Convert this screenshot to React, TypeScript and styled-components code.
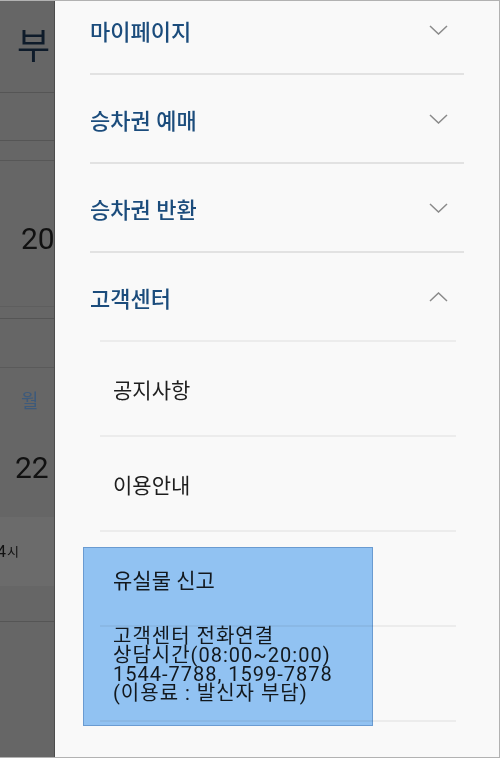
import React, { FC } from "react";
import styled, { createGlobalStyle } from "styled-components";

const GlobalStyle = createGlobalStyle`
  html, body {
    margin: 0;
    padding: 0;
    background: #ffffff;
  }
  * {
    box-sizing: border-box;
  }
`;

const FONT = `Roboto, "Noto Sans CJK KR", sans-serif`;

const Frame = styled.div`
  width: 500px;
  height: 758px;
  display: flex;
  overflow: hidden;
  border: 1px solid #b2b2b2;
  border-left: none;
  font-family: ${FONT};
`;

/* the page behind the drawer, dimmed */
const Backdrop = styled.div`
  width: 54px;
  flex: none;
  background: #666666;
  display: flex;
  flex-direction: column;
  overflow: hidden;
  white-space: nowrap;
`;

const BackCell = styled.div<{ $h?: number; $pt?: number; $line?: string; $bg?: string }>`
  height: ${(p) => (p.$h ? `${p.$h}px` : "auto")};
  flex: ${(p) => (p.$h ? "none" : "1")};
  padding-top: ${(p) => p.$pt ?? 0}px;
  display: flex;
  align-items: ${(p) => (p.$pt !== undefined ? "flex-start" : "center")};
  background: ${(p) => p.$bg ?? "transparent"};
  border-bottom: ${(p) => (p.$line ? `1px solid ${p.$line}` : "none")};
`;

const BackText = styled.span<{ $size: number; $color: string; $left: number }>`
  font-size: ${(p) => p.$size}px;
  line-height: 1;
  color: ${(p) => p.$color};
  margin-left: ${(p) => p.$left}px;
`;

const Drawer = styled.div`
  flex: 1;
  position: relative;
  background: #f9f9f9;
  border-left: 1px solid #4c4c4c;
  padding: 0 35px;
  overflow: hidden;
`;

const MenuList = styled.div`
  margin-top: -15px;
  display: flex;
  flex-direction: column;
`;

const MainRow = styled.div<{ $open?: boolean }>`
  height: ${(p) => (p.$open ? 87 : 89)}px;
  display: flex;
  align-items: center;
  justify-content: space-between;
  padding-right: 16px;
  border-bottom: ${(p) => (p.$open ? "none" : "2px solid #e2e2e2")};
  font-size: 22px;
  font-weight: 500;
  color: #1b4c7c;
`;

const SubList = styled.div`
  margin: 0 8px 0 10px;
  display: flex;
  flex-direction: column;
`;

const SubItem = styled.div`
  height: 95px;
  display: flex;
  align-items: center;
  padding-left: 13px;
  border-top: 2px solid #ececec;
  font-size: 21px;
  color: #1e1e1e;
`;

const CallItem = styled.div`
  border-top: 2px solid #ececec;
  border-bottom: 2px solid #ececec;
  padding: 0 0 17px 13px;
  color: #1e1e1e;
`;

const CallLine = styled.div`
  height: 19px;
  font-size: 20px;
  line-height: 19px;
  letter-spacing: 1px;
  white-space: nowrap;
`;

const Highlight = styled.div`
  position: absolute;
  left: 28px;
  top: 546px;
  width: 290px;
  height: 179px;
  background: #95c7f8;
  border: 1px solid #6c9fd6;
  mix-blend-mode: multiply;
  pointer-events: none;
`;

const Chevron: FC<{ up?: boolean }> = ({ up }) => (
  <svg width="19" height="10" viewBox="0 0 19 10" fill="none">
    <polyline
      points={up ? "1,9 9.5,1 18,9" : "1,1 9.5,9 18,1"}
      stroke="#8a8a8a"
      strokeWidth="1.5"
    />
  </svg>
);

const menus = ["마이페이지", "승차권 예매", "승차권 반환"];
const subs = ["공지사항", "이용안내", "유실물 신고"];
const callLines = [
  "고객센터 전화연결",
  "상담시간(08:00~20:00)",
  "1544-7788, 1599-7878",
  "(이용료 : 발신자 부담)",
];

const App: FC = () => {
  return (
    <>
      <GlobalStyle />
      <Frame>
        <Backdrop>
          <BackCell $h={92} $line="#555555">
            <BackText $size={36} $color="#0e1b2a" $left={17}>
              부
            </BackText>
          </BackCell>
          <BackCell $h={48} $line="#555555" />
          <BackCell $h={20} $line="#575757" />
          <BackCell $h={146} $pt={63} $line="#5e5e5e">
            <BackText $size={30} $color="#111111" $left={21}>
              20
            </BackText>
          </BackCell>
          <BackCell $h={12} $line="#555555" />
          <BackCell $h={49} $line="#5a5a5a" />
          <BackCell $h={66}>
            <BackText $size={19} $color="#3d5a7b" $left={21}>
              월
            </BackText>
          </BackCell>
          <BackCell $h={83} $pt={19}>
            <BackText $size={30} $color="#111111" $left={15}>
              22
            </BackText>
          </BackCell>
          <BackCell $h={69} $bg="#6b6b6b">
            <BackText $size={16} $color="#111111" $left={-3}>
              4
            </BackText>
            <BackText $size={13} $color="#111111" $left={1}>
              시
            </BackText>
          </BackCell>
          <BackCell $h={36} $line="#555555" />
          <BackCell />
        </Backdrop>
        <Drawer>
          <MenuList>
            {menus.map((m) => (
              <MainRow key={m}>
                {m}
                <Chevron />
              </MainRow>
            ))}
            <MainRow $open>
              고객센터
              <Chevron up />
            </MainRow>
            <SubList>
              {subs.map((s) => (
                <SubItem key={s}>{s}</SubItem>
              ))}
              <CallItem>
                {callLines.map((l) => (
                  <CallLine key={l}>{l}</CallLine>
                ))}
              </CallItem>
            </SubList>
          </MenuList>
          <Highlight />
        </Drawer>
      </Frame>
    </>
  );
};

export default App;
